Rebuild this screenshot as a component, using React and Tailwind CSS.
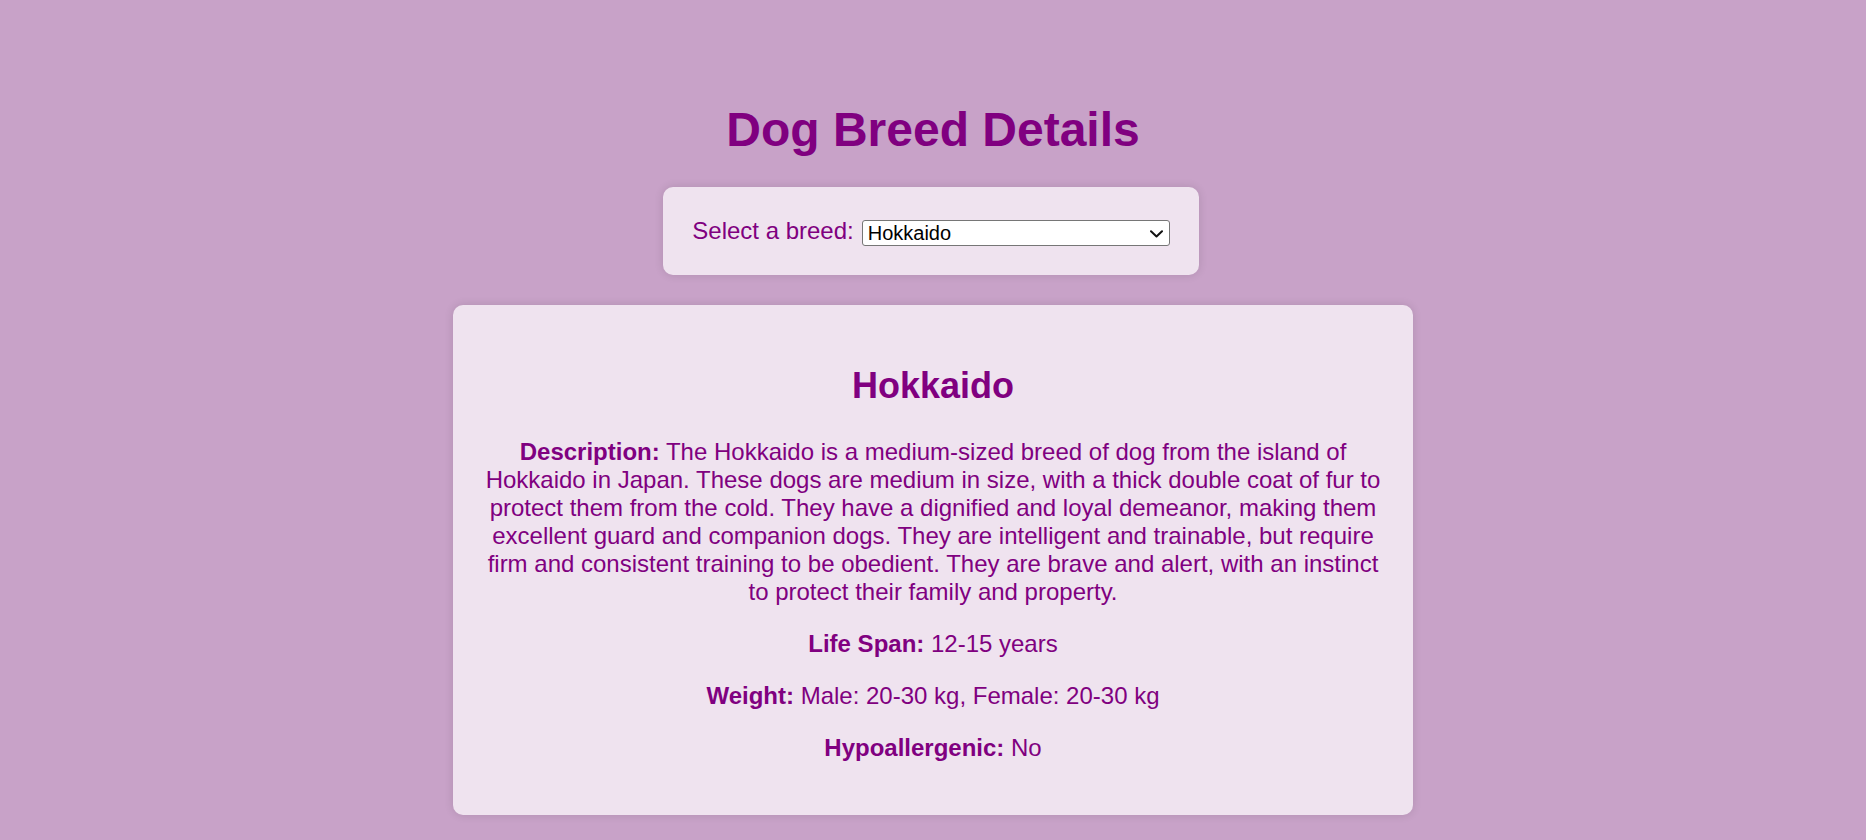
import React from "react";

export default function App() {
  return (
    <div
      className="min-h-screen w-full bg-[#c8a2c8] flex flex-col items-center pt-[102px] pb-[26px]"
      style={{ fontFamily: '"Liberation Sans", Arial, Helvetica, sans-serif' }}
    >
      <h1 className="text-[48px] leading-[55px] font-bold text-[#800080]">Dog Breed Details</h1>

      <div className="mt-[30px] mr-[4px] w-[536px] h-[88px] bg-[#efe3ef] rounded-[10px] shadow-[0_0_10px_rgba(0,0,0,0.12)] flex items-center justify-center gap-[8px]">
        <label htmlFor="breed" className="text-[24px] leading-[28px] text-[#800080]">
          Select a breed:
        </label>
        <div className="relative w-[308px] h-[26px] mt-[3px]">
          <select
            id="breed"
            defaultValue="Hokkaido"
            className="appearance-none w-full h-full bg-white border border-[#767676] rounded-[3px] pl-[5px] pr-[24px] text-[20px] leading-[24px] text-black outline-none"
            style={{ fontFamily: '"Liberation Sans", Arial, sans-serif' }}
          >
            <option>Akita</option>
            <option>Hokkaido</option>
            <option>Shiba Inu</option>
          </select>
          <svg
            className="absolute right-[7px] top-[10px] pointer-events-none"
            width="13"
            height="8"
            viewBox="0 0 13 8"
            fill="none"
          >
            <path d="M1 1.2 L6.5 6.5 L12 1.2" stroke="#111" strokeWidth="2" strokeLinecap="round" strokeLinejoin="round" />
          </svg>
        </div>
      </div>

      <div className="mt-[30px] w-[960px] bg-[#efe3ef] rounded-[10px] shadow-[0_0_10px_rgba(0,0,0,0.12)] px-[32px] pt-[60px] pb-[53px] text-center text-[#800080]">
        <h2 className="text-[36px] leading-[41px] font-bold">Hokkaido</h2>
        <p className="mt-[32px] text-[24px] leading-[28px]">
          <strong className="font-bold">Description:</strong> The Hokkaido is a medium-sized breed of dog from the island of
          Hokkaido in Japan. These dogs are medium in size, with a thick double coat of fur to protect them from the cold.
          They have a dignified and loyal demeanor, making them excellent guard and companion dogs. They are intelligent and
          trainable, but require firm and consistent training to be obedient. They are brave and alert, with an instinct to
          protect their family and property.
        </p>
        <p className="mt-[24px] text-[24px] leading-[28px]">
          <strong className="font-bold">Life Span:</strong> 12-15 years
        </p>
        <p className="mt-[24px] text-[24px] leading-[28px]">
          <strong className="font-bold">Weight:</strong> Male: 20-30 kg, Female: 20-30 kg
        </p>
        <p className="mt-[24px] text-[24px] leading-[28px]">
          <strong className="font-bold">Hypoallergenic:</strong> No
        </p>
      </div>
    </div>
  );
}
